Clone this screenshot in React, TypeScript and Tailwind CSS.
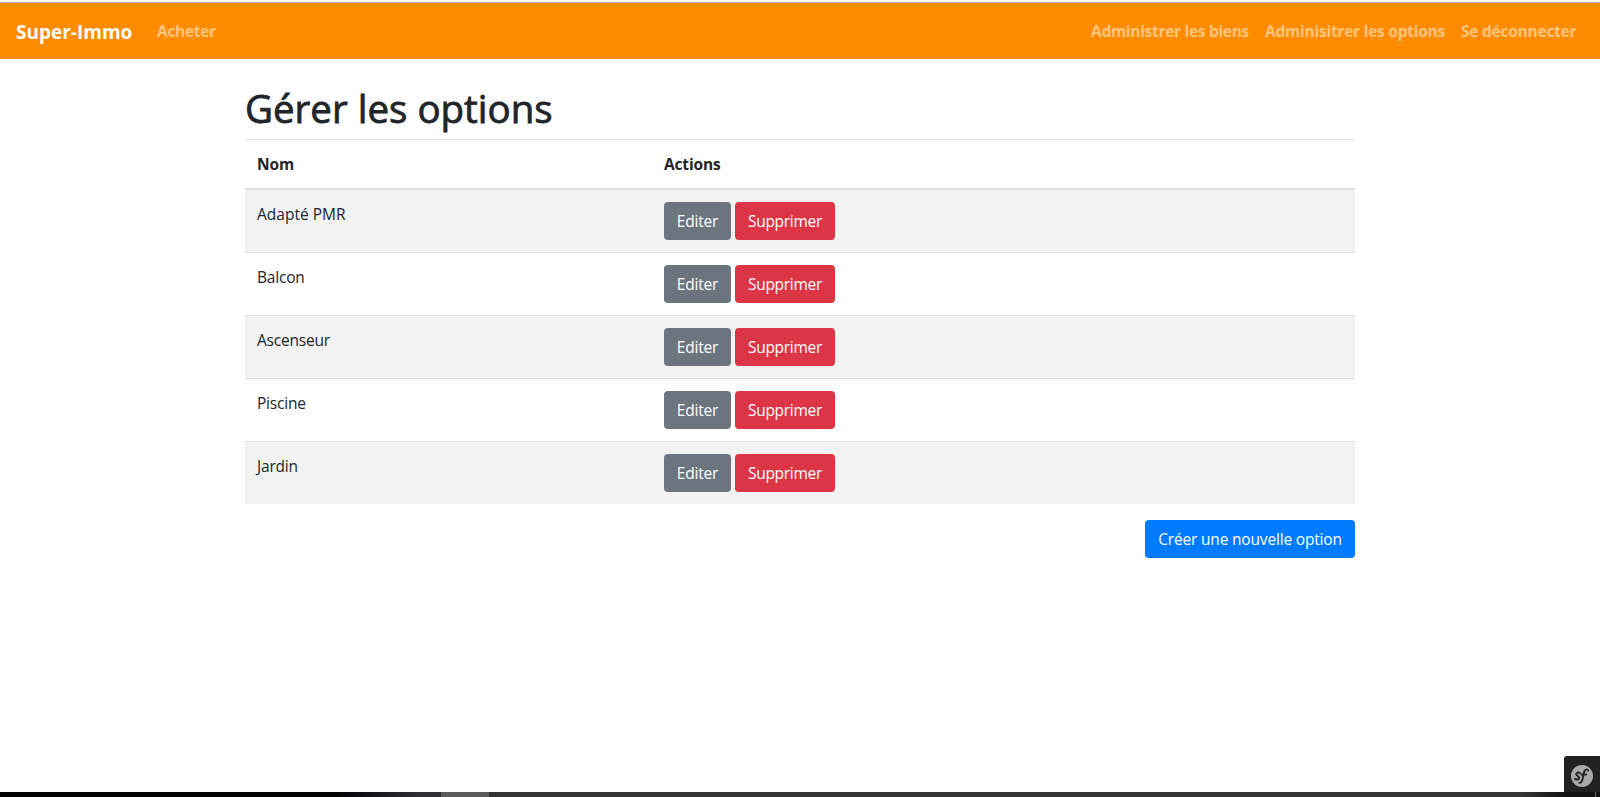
const options: string[] = ['Adapté PMR', 'Balcon', 'Ascenseur', 'Piscine', 'Jardin'];

const btn =
  'flex h-[38px] items-center justify-center rounded-[4px] text-[15.5px] leading-6 whitespace-nowrap text-white';

function Navbar() {
  return (
    <nav className="flex h-14 shrink-0 items-center bg-[#ff8c00] px-4 pt-0.5 font-bold whitespace-nowrap">
      <a className="w-[117px] text-[19px] leading-[30px] text-white">Super-Immo</a>
      <a className="ml-6 text-[15.5px] tracking-[-0.3px] text-white/50">Acheter</a>
      <div className="ml-auto flex gap-4 pr-[7px] text-[15.5px] text-white/50">
        <a className="w-[158px] tracking-[-0.3px]">Administrer les biens</a>
        <a className="w-[180px] tracking-[-0.24px]">Adminisitrer les options</a>
        <a className="w-[116px] tracking-[-0.24px]">Se déconnecter</a>
      </div>
    </nav>
  );
}

function OptionRow({ name, index }: { name: string; index: number }) {
  return (
    <div
      className={`flex border-[#dee2e6] px-3 ${index === 0 ? 'h-[62px]' : 'h-[63px] border-t'} ${
        index % 2 === 0 ? 'bg-[#f2f2f2]' : 'bg-white'
      }`}
    >
      <div className={`w-[407px] pt-3 text-[15.5px] leading-6 ${index === 0 ? '' : 'tracking-[-0.2px]'}`}>{name}</div>
      <div className="flex gap-1 pt-3">
        <button className={`${btn} w-[67px] bg-[#6c757d] tracking-[-0.2px]`}>Editer</button>
        <button className={`${btn} w-[100px] bg-[#dc3545] tracking-[-0.3px]`}>Supprimer</button>
      </div>
    </div>
  );
}

function SymfonyBadge() {
  return (
    <div className="absolute right-0 bottom-[5px] flex h-9 w-9 items-center justify-center rounded-tl-[3px] bg-[#222] pt-1">
      <svg width="22" height="22" viewBox="0 0 22 22" fill="none" stroke="#222" strokeLinecap="round">
        <circle cx="11" cy="11" r="11" fill="#aaa" stroke="none" />
        <path d="M9 8C7.600 6.900 5.200 7.600 5.300 9.200c.1 1.900 3 1.800 2.800 3.700-.2 1.800-2.900 2.200-4.100 1" strokeWidth="2" />
        <path d="M17.200 5.600c-.5-1.800-2.700-1.600-3.700.4-1 2.200-1.200 5.200-2 8.300-.6 2.600-1.800 4-3.200 3.400M10.300 9.500h5" strokeWidth="1.900" />
      </svg>
    </div>
  );
}

export default function App() {
  return (
    <div className="relative flex h-[797px] flex-col overflow-hidden bg-white font-['Open_Sans','Noto_Sans',sans-serif] text-[#212529]">
      <div className="h-[3px] shrink-0 border-b border-[#b1adb5]" />
      <Navbar />
      <main className="mx-auto w-[1110px] grow">
        <h1 className="pt-[26px] text-[38.5px] leading-[46px] font-medium whitespace-nowrap [-webkit-text-stroke:0.8px_#212529]">
          Gérer les options
        </h1>
        <section className="mt-2">
          <div className="flex h-[51px] border-t border-b-2 border-[#dee2e6] px-3 pt-3 text-[15.5px] leading-6 font-bold tracking-[-0.15px]">
            <div className="w-[407px]">Nom</div>
            <div>Actions</div>
          </div>
          {options.map((name, index) => (
            <OptionRow key={name} name={name} index={index} />
          ))}
        </section>
        <div className="mt-4 flex justify-end">
          <button className={`${btn} w-[210px] bg-[#007bff] tracking-[-0.18px]`}>Créer une nouvelle option</button>
        </div>
      </main>
      <SymfonyBadge />
      <footer className="flex h-[5px] shrink-0">
        <div className="w-[441px] bg-linear-to-r from-[#030304] from-75% to-[#303032] to-95%" />
        <div className="w-12 bg-[#5b5b5b]" />
        <div className="grow bg-[#333]" />
        <div className="w-[70px] bg-linear-to-r from-[#333] to-[#111] to-60%" />
        <div className="w-px bg-[#666]" />
        <div className="w-1 bg-[#111]" />
      </footer>
    </div>
  );
}
